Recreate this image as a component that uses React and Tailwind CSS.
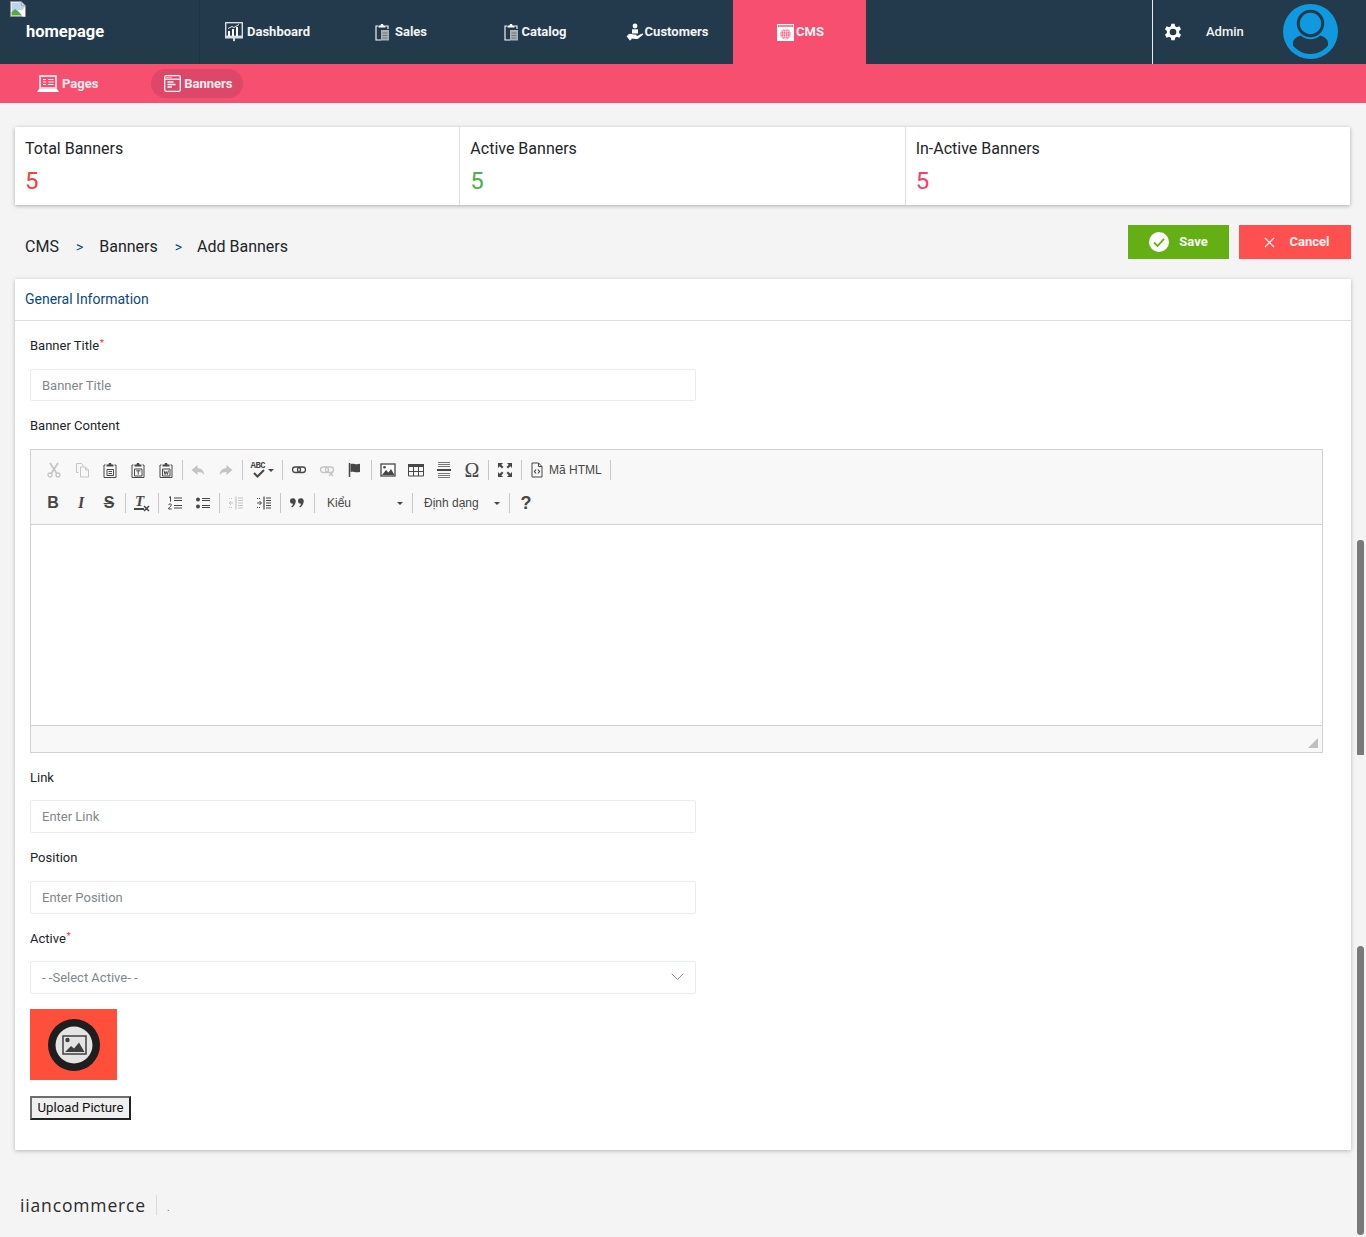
import React from "react";

const Sv = ({ s = 16, v = "0 0 16 16", c = "", children }) => (
  <svg width={s} height={s} viewBox={v} className={c} fill="none">{children}</svg>
);

/* ---------- header icons ---------- */
const DashIcon = () => (
  <svg width="18" height="20" viewBox="0 0 18 20" fill="none">
    <rect x="0.7" y="0.7" width="16.6" height="13.6" fill="none" stroke="#d9dde0" strokeWidth="1.4" />
    <path d="M0 15h18v1.5H0z" fill="#d9dde0" />
    <path d="M8 16h2v2.5l-1 1-1-1z" fill="#d9dde0" />
    <path d="M3 14V9h2v5zM7 14V7h2v7zM11 14V5h2v9z" fill="#fff" />
    <path d="M3 6.5 7 4.5l2 1 5-3" stroke="#fff" strokeWidth="0.9" />
  </svg>
);
const ClipIcon = () => (
  <svg width="14" height="18" viewBox="0 0 14 18" fill="none">
    <path d="M3 3H1v14h5" stroke="#fff" strokeWidth="1.1" />
    <path d="M10.5 3H13v3" stroke="#fff" strokeWidth="1.1" />
    <path d="M3.5 4.5V2.6h2L6 1h2l.5 1.6h2v1.9z" fill="#fff" />
    <rect x="6" y="7" width="8" height="10.5" fill="#a9b1b7" />
    <path d="M7.5 10h5M7.5 12.5h5M7.5 15h5" stroke="#5a6670" strokeWidth="0.8" />
  </svg>
);
const CustIcon = () => (
  <svg width="18" height="18" viewBox="0 0 18 18" fill="none">
    <circle cx="9" cy="3" r="2.4" fill="#fff" />
    <path d="M6 6.3h6v4.2H6z" fill="#fff" />
    <path d="M2 11.5c2-1.4 3.5-.8 5 0h3c.9 0 1 1.2 0 1.3H8.2l3.4-.1 4.5-2.2c1-.3 1.5.6.8 1.3l-4.5 3.6c-1.2.7-3.5.6-6.5.2l-2 2z" fill="#fff" />
    <path d="M0.5 13.2 2 12l3.5 4.2L4 17.5z" fill="#fff" />
  </svg>
);
const CmsIcon = () => (
  <svg width="17" height="17" viewBox="0 0 17 17" fill="none">
    <rect width="17" height="17" fill="#fff" />
    <rect x="1" y="1" width="15" height="2" fill="#f74f70" />
    <rect x="1.5" y="1.5" width="14" height="1" fill="#fbb" />
    <circle cx="8.5" cy="10" r="5.2" fill="#f74f70" />
    <g stroke="#fff" strokeWidth="0.6">
      <circle cx="8.5" cy="10" r="4.6" />
      <ellipse cx="8.5" cy="10" rx="2.2" ry="4.6" />
      <path d="M8.5 5.4v9.2M3.9 10h9.2M4.6 7.7h7.8M4.6 12.3h7.8" />
    </g>
  </svg>
);
const GearIcon = () => (
  <svg width="20" height="20" viewBox="0 0 24 24" fill="#fff">
    <path fillRule="evenodd" d="M14 1h-4l-.6 3a8.500 8.500 0 0 0-2.100 1.200L4.400 4.200 2.400 7.700l2.300 2a8.500 8.500 0 0 0 0 2.600l-2.300 2 2 3.500 2.900-1a8.500 8.500 0 0 0 2.100 1.200l.6 3h4l.6-3a8.500 8.500 0 0 0 2.100-1.200l2.900 1 2-3.500-2.300-2a8.500 8.500 0 0 0 0-2.600l2.300-2-2-3.500-2.900 1A8.500 8.500 0 0 0 14.600 4zM12 15a4 4 0 1 1 0-8 4 4 0 0 1 0 8z" transform="translate(0 1)" />
  </svg>
);
const Avatar = () => (
  <svg width="55" height="55" viewBox="0 0 55 55" fill="none">
    <circle cx="27.5" cy="27.5" r="27.5" fill="#0f9adf" />
    <circle cx="27.5" cy="19.5" r="12.2" fill="#0f9adf" stroke="#233a4c" strokeWidth="3" />
    <path d="M10 39c0-4 4-6.5 8-7.5 2.5 2.5 5.800 3.800 9.500 3.800S34.500 34 37 31.500c4 1 8 3.500 8 7.500v2.500C40.500 46.800 34.500 50 27.500 50S14.500 46.800 10 41.500z" fill="#233a4c" />
  </svg>
);
const BrokenImg = () => (
  <svg width="16" height="16" viewBox="0 0 16 16" fill="none">
    <path d="M0.500 0.500H11l4.500 4.500V15.500H0.500z" fill="#fff" stroke="#8e8e8e" />
    <path d="M11 0.500V5h4.500" fill="#d8d8d8" stroke="#8e8e8e" />
    <path d="M1.500 1.500h9V6h4v3L1.500 10z" fill="#bcd2f2" />
    <path d="M1.500 14.500V11L5 8l4 3 3 3.500z" fill="#58a845" />
    <path d="M12 9.500 15 6v9.500h-3z" fill="#fff" />
  </svg>
);
const PagesIcon = () => (
  <svg width="22" height="18" viewBox="0 0 22 18" fill="none">
    <rect x="3" y="1" width="16" height="12" stroke="#fff" strokeWidth="1.500" />
    <path d="M6 4.500h3M6 7h3M6 9.500h3M11 4.500h5.500M11 7h5.500M11 9.500h5.500" stroke="#fff" strokeWidth="1.200" />
    <path d="M2 14h18l2 3H0z" fill="#fff" />
  </svg>
);
const BannersIcon = () => (
  <svg width="17" height="17" viewBox="0 0 17 17" fill="none">
    <rect x="0.700" y="0.700" width="15.600" height="15.600" rx="1.500" stroke="#fff" strokeWidth="1.300" />
    <path d="M1 4.200h15" stroke="#fff" strokeWidth="1.200" />
    <path d="M2.500 2.500h1M4.500 2.500h1M6.500 2.500h1" stroke="#fff" />
    <path d="M3.500 7h6M3.500 9.500h8M3.500 12h4.500" stroke="#fff" strokeWidth="1.300" />
  </svg>
);

/* ---------- editor icons ---------- */
const D = "#474747";
const L = "#c4c4c4";
const Cut = () => (
  <Sv><g stroke={L} strokeWidth="1.700">
    <path d="M4 1l6.500 10M12 1 5.500 11" />
    <circle cx="4" cy="13" r="2" strokeWidth="1.300" />
    <circle cx="12" cy="13" r="2" strokeWidth="1.300" />
  </g></Sv>
);
const CopyI = () => (
  <Sv><g stroke={L} strokeWidth="1">
    <path d="M2.500 1.500h5l1.500 1.500v1.500M2.500 1.500v9h2" />
    <path d="M6.500 5h5l3 3v7h-8z" fill="#f8f8f8" />
    <path d="M11.500 5v3h3" />
  </g></Sv>
);
const Paste = ({ k }) => (
  <Sv>
    <path d="M3.500 3H2v12.500h12V3h-1.500" stroke={D} strokeWidth="1" />
    <path d="M4.500 4.500V2.500h2L7 1h2l.5 1.500h2v2z" fill={D} />
    {k === "l" && <path d="M5 7.500h6.500v6H5zM6.500 9.500h3.500M6.500 11.500h3.500" stroke={D} strokeWidth="1" />}
    {k === "t" && <path d="M4.500 7h7.500v7H4.500zM6.300 8.800h4M8.200 8.800v3.800" stroke={D} strokeWidth="1" />}
    {k === "w" && <path d="M4.500 7h7.500v7H4.500zM6 8.500l1 4 1.200-3 1.200 3 1-4" stroke={D} strokeWidth="1" />}
  </Sv>
);
const Undo = ({ flip }) => (
  <Sv c={flip ? "-scale-x-100" : ""}>
    <path d="M7.500 3 1.500 8l6 5v-3c3 0 5 .6 7 3-.5-4-3-6.700-7-7z" fill={L} />
  </Sv>
);
const Spell = () => (
  <span className="flex items-center gap-[2px]">
    <span className="relative block w-[15px] h-[16px]">
      <span className="absolute -top-[1px] left-0 text-[9px] leading-[11px] font-['Liberation_Mono',monospace] font-bold text-[#474747] tracking-[-0.5px]">ABC</span>
      <svg className="absolute left-[2px] top-[7px]" width="12" height="9" viewBox="0 0 12 9" fill="none"><path d="M1 4l3.500 3.500L11 1" stroke={D} strokeWidth="2" /></svg>
    </span>
    <span className="block border-x-[3px] border-t-[3px] border-x-transparent border-t-[#474747]" />
  </span>
);
const LinkI = ({ off }) => (
  <Sv>
    <g stroke={off ? L : D} strokeWidth="1.300">
      <rect x="1.500" y="5" width="8" height="5.500" rx="2.700" />
      <rect x="6.500" y="5" width="8" height="5.500" rx="2.700" />
      {off && <path d="M10 10l4 4M14 10l-4 4" />}
    </g>
  </Sv>
);
const Flag = () => (
  <Sv>
    <path d="M2.500 1v14" stroke={D} strokeWidth="1.500" />
    <path d="M3.500 2c3-1.200 4.500 1 9.500-.2v8.200c-5 1.200-6.500-1-9.500.2z" fill={D} />
  </Sv>
);
const ImageI = () => (
  <Sv>
    <rect x="1" y="2" width="14" height="12" stroke={D} strokeWidth="1.300" fill="#fff" />
    <circle cx="4.500" cy="5.300" r="1.300" fill={D} />
    <path d="M2 13l4-5 2.500 2.500L11 7l3.500 6z" fill={D} />
  </Sv>
);
const TableI = () => (
  <Sv>
    <path d="M0 2h16v3H0z" fill={D} />
    <path d="M.5 2v12h15V2M.5 9.500h15M5.500 5v9M10.500 5v9" stroke={D} strokeWidth="1" />
  </Sv>
);
const Hr = () => (
  <Sv>
    <path d="M2 .5h12M2 2.500h12M2 4.500h12M2 11.500h12M2 13.500h12M2 15.500h12" stroke="#777" strokeWidth="1" />
    <path d="M1 8h14" stroke={D} strokeWidth="2" />
  </Sv>
);
const Maxi = () => (
  <Sv>
    <path d="M1 1h5L4.300 2.700 6.500 5 5 6.500 2.700 4.300 1 6zM15 1v5l-1.700-1.700L11 6.500 9.500 5l2.200-2.300L10 1zM1 15v-5l1.700 1.700L5 9.500 6.500 11l-2.200 2.300L6 15zM15 15h-5l1.700-1.700L9.500 11 11 9.500l2.300 2.200L15 10z" fill={D} />
  </Sv>
);
const Source = () => (
  <Sv>
    <path d="M3 1h6.500L13 4.500V15H3z" stroke={D} strokeWidth="1" />
    <path d="M9.500 1v3.500H13" stroke={D} strokeWidth="1" />
    <path d="M7 7.500 5.500 9.500 7 11.500M9 7.500l1.500 2L9 11.500" stroke={D} strokeWidth="1.200" />
  </Sv>
);
const RemoveF = () => (
  <span className="relative block w-[16px] h-[16px] font-['Liberation_Serif',serif]">
    <span className="absolute left-[1px] -top-[1px] text-[15px] leading-[15px] italic font-bold text-[#474747]">T</span>
    <span className="absolute left-0 top-[13px] w-[10px] h-[1.500px] bg-[#474747]" />
    <svg className="absolute left-[9px] top-[10px]" width="7" height="7" viewBox="0 0 7 7"><path d="M1 1l5 5M6 1 1 6" stroke={D} strokeWidth="1.500" /></svg>
  </span>
);
const Ol = () => (
  <Sv>
    <path d="M7 3h8M7 5.500h8M7 10.500h8M7 13h8" stroke={D} strokeWidth="1.200" />
    <path d="M2 2.500l1.500-.8v5M1.500 10c.3-1.500 3-1.500 3 0 0 1-3 2.500-3 4h3.200" stroke={D} strokeWidth="1" />
  </Sv>
);
const Ul = () => (
  <Sv>
    <circle cx="3" cy="4.500" r="2" fill={D} />
    <circle cx="3" cy="11.500" r="2" fill={D} />
    <path d="M7 3.500h8M7 5.500h8M7 10.500h8M7 12.500h8" stroke={D} strokeWidth="1.200" />
  </Sv>
);
const Indent = ({ off, out }) => {
  const c = off ? L : D;
  return (
    <Sv>
      <path d="M8 1.500v13" stroke={c} strokeWidth="1.200" />
      <path d="M10 3h5M10 5.500h5M10 8h5M10 10.500h5M10 13h5" stroke={c} strokeWidth="1" />
      <path d={out ? "M1 8h4M3 6 1 8l2 2" : "M1 8h4M3.500 6l2 2-2 2"} stroke={c} strokeWidth="1" />
      <path d="M1 3.500h4M1 12.500h4" stroke={c} strokeWidth="1" strokeDasharray="1 1" />
    </Sv>
  );
};
const Quote = () => (
  <Sv>
    <circle cx="3.700" cy="6" r="2.700" fill={D} />
    <path d="M4.200 3.500c2.300 0 2.600 2 2.400 3.500-.3 2.500-1.700 4.500-3.600 5.500l-.8-1c1.500-1 2-2.500 2-4.500z" fill={D} />
    <circle cx="11.700" cy="6" r="2.700" fill={D} />
    <path d="M12.200 3.500c2.300 0 2.600 2 2.400 3.500-.3 2.500-1.700 4.500-3.600 5.500l-.8-1c1.500-1 2-2.500 2-4.500z" fill={D} />
  </Sv>
);

const Btn = ({ children }) => (
  <span className="flex w-[28px] h-[24px] shrink-0 items-center justify-center">{children}</span>
);
const Sep = () => (
  <span className="flex w-[4px] h-[20px] shrink-0 justify-center">
    <span className="block w-px h-full bg-[#c7c7c7]" />
  </span>
);
const Sep5 = () => (
  <span className="flex w-[5px] h-[20px] shrink-0 justify-center">
    <span className="block w-px h-full bg-[#c7c7c7]" />
  </span>
);
const Caret = () => (
  <span className="block border-x-[3px] border-t-[3px] border-x-transparent border-t-[#474747]" />
);
const G = ({ children, className = "" }) => (
  <span className={"text-[#474747] leading-none " + className}>{children}</span>
);

const NavItem = ({ icon, label, active, gap = "gap-[3px]", w = "w-[133px]", pad = "" }) => (
  <div className={"flex h-full items-center justify-center " + w + " " + gap + " " + pad + (active ? " bg-[#f74f70]" : "")}>
    <span className="flex shrink-0">{icon}</span>
    <span className="text-[13px] font-bold text-[#f3f4f5] -mt-px">{label}</span>
  </div>
);

const Stat = ({ title, color, border }) => (
  <div className={"flex-1 pl-[10px] pt-[12px] h-full " + (border ? "border-l border-[#dddddd]" : "")}>
    <div className="text-[16px] leading-[20px] text-[#212529]">{title}</div>
    <div className={"mt-[10px] text-[24px] leading-[24px] " + color}>5</div>
  </div>
);

const Field = ({ label, req, ph, className = "", gap = "mt-[14px]", h = "h-[33px]" }) => (
  <div className={className}>
    <div className="h-[16px] text-[13px] leading-[16px] text-[#212529]">
      {label}
      {req && <sup className="text-[#ff2020] text-[9px] ml-px">*</sup>}
    </div>
    <input
      placeholder={ph}
      className={"block w-[666px] rounded-[2px] border border-[#e9ecef] bg-white px-[11px] text-[13px] outline-none placeholder:text-[#7f878e] " + h + " " + gap}
    />
  </div>
);

export default function App() {
  return (
    <div className="relative h-[1237px] overflow-hidden bg-[#f4f4f4] font-['Roboto',sans-serif] text-[#212529]">
      {/* top navigation */}
      <header className="flex h-[64px] bg-[#233a4c]">
        <div className="relative w-[200px] shrink-0 border-r border-[#1f3342]">
          <span className="absolute left-[10px] top-[1px]"><BrokenImg /></span>
          <span className="absolute left-[26px] top-[22px] text-[16.500px] leading-[20px] font-bold text-white">homepage</span>
        </div>
        <nav className="flex">
          <NavItem icon={<DashIcon />} label="Dashboard" gap="gap-[4px]" pad="pl-[2px]" />
          <NavItem icon={<ClipIcon />} label="Sales" gap="gap-[6px]" pad="pl-[3px]" />
          <NavItem icon={<ClipIcon />} label="Catalog" gap="gap-[3px]" pad="pl-[6px]" />
          <NavItem icon={<CustIcon />} label="Customers" gap="gap-[1px]" w="w-[134px]" pad="pl-[2px]" />
          <NavItem icon={<CmsIcon />} label="CMS" active gap="gap-[2px]" pad="pl-[2px]" />
        </nav>
        <div className="ml-auto flex h-full w-[214px] shrink-0 items-center border-l border-[#e8eaec]">
          <span className="ml-[10px] flex"><GearIcon /></span>
          <span className="ml-[23px] text-[13px] font-medium text-[#f3f4f5] -mt-px">Admin</span>
          <span className="ml-[39px] flex -mt-[1px]"><Avatar /></span>
        </div>
      </header>

      {/* sub navigation */}
      <div className="flex h-[39px] items-center bg-[#f74f70] pl-[37px]">
        <div className="flex items-center gap-[3px]">
          <PagesIcon />
          <span className="text-[13px] font-bold text-[#fbeff2]">Pages</span>
        </div>
        <div className="ml-[53px] flex h-[29px] w-[92px] items-center justify-center gap-[3px] rounded-full bg-[#dd4768] pl-[2px]">
          <BannersIcon />
          <span className="text-[13px] font-bold text-[#fbeff2]">Banners</span>
        </div>
      </div>

      <main className="pl-[15px] pr-[15px]">
        {/* stats */}
        <section className="mt-[24px] flex h-[78px] w-[1335px] bg-white shadow-[0_1px_4px_rgba(0,0,0,0.3)]">
          <Stat title="Total Banners" color="text-[#f44336]" />
          <Stat title="Active Banners" color="text-[#4caf50]" border />
          <Stat title="In-Active Banners" color="text-[#f73e6c]" border />
        </section>

        {/* breadcrumb + actions */}
        <div className="flex h-[74px] w-[1336px] items-start">
          <div className="mt-[32px] flex items-center text-[16px] leading-[20px] pl-[10px]">
            <span>CMS</span>
            <span className="ml-[17px] text-[#0a4a7f] text-[14px]">&gt;</span>
            <span className="ml-[16px]">Banners</span>
            <span className="ml-[17px] text-[#0a4a7f] text-[14px]">&gt;</span>
            <span className="ml-[15px]">Add Banners</span>
          </div>
          <div className="ml-auto mt-[20px] flex gap-[10px]">
            <button className="flex h-[34px] w-[101px] items-center justify-center gap-[10px] bg-[#64b014] text-[13px] font-bold text-[#f7f9f3]">
              <svg width="20" height="20" viewBox="0 0 20 20" fill="none">
                <circle cx="10" cy="10" r="10" fill="#fff" />
                <path d="M5 10.500 8.500 14 15 6.800" stroke="#64b014" strokeWidth="1.800" />
              </svg>
              <span className="-mt-px">Save</span>
            </button>
            <button className="flex h-[34px] w-[112px] items-center justify-center gap-[15px] bg-[#ff5050] pl-[3px] text-[13px] font-bold text-[#fff5f5]">
              <svg width="11" height="11" viewBox="0 0 11 11" fill="none">
                <path d="M1 1l9 9M10 1l-9 9" stroke="#fff" strokeWidth="1.100" />
              </svg>
              <span className="-mt-px">Cancel</span>
            </button>
          </div>
        </div>

        {/* form card */}
        <section className="h-[871px] w-[1336px] bg-white shadow-[0_1px_4px_rgba(0,0,0,0.25)]">
          <div className="flex h-[42px] items-center border-b border-[#dedede] pl-[10px] text-[14px] text-[#0a4a7f]">
            General Information
          </div>
          <div className="px-[15px]">
            <Field className="mt-[17px]" gap="mt-[15px]" h="h-[32px]" label="Banner Title" req ph="Banner Title" />

            <div className="mt-[17px] h-[16px] text-[13px] leading-[16px]">Banner Content</div>

            {/* rich text editor */}
            <div className="mt-[15px] h-[304px] w-[1293px] border border-[#d1d1d1] bg-[#f8f8f8] font-['Liberation_Sans',sans-serif]">
              <div className="h-[75px] border-b border-[#d1d1d1] pl-[9px] pt-[8px]">
                <div className="flex h-[24px] items-center">
                  <Btn><Cut /></Btn>
                  <Btn><CopyI /></Btn>
                  <Btn><Paste k="l" /></Btn>
                  <Btn><Paste k="t" /></Btn>
                  <Btn><Paste k="w" /></Btn>
                  <Sep />
                  <Btn><Undo /></Btn>
                  <Btn><Undo flip /></Btn>
                  <Sep />
                  <span className="flex w-[36px] h-[24px] items-center justify-center"><Spell /></span>
                  <Sep5 />
                  <Btn><LinkI /></Btn>
                  <Btn><LinkI off /></Btn>
                  <Btn><Flag /></Btn>
                  <Sep5 />
                  <Btn><ImageI /></Btn>
                  <Btn><TableI /></Btn>
                  <Btn><Hr /></Btn>
                  <Btn><G className="text-[20px] font-['Liberation_Serif',serif]">Ω</G></Btn>
                  <Sep5 />
                  <Btn><Maxi /></Btn>
                  <Sep />
                  <span className="flex w-[85px] h-[24px] items-center pl-[6px] gap-[4px]">
                    <Source />
                    <span className="text-[12px] text-[#474747]">Mã HTML</span>
                  </span>
                  <Sep />
                </div>
                <div className="mt-[9px] flex h-[24px] items-center -ml-px">
                  <Btn><G className="text-[16px] font-bold">B</G></Btn>
                  <Btn><G className="text-[16px] font-bold italic font-['Liberation_Serif',serif]">I</G></Btn>
                  <Btn><G className="text-[16px] font-bold line-through">S</G></Btn>
                  <Sep />
                  <span className="ml-px flex"><Btn><RemoveF /></Btn></span>
                  <Sep />
                  <span className="ml-px flex"><Btn><Ol /></Btn></span>
                  <Btn><Ul /></Btn>
                  <Sep />
                  <span className="ml-px flex"><Btn><Indent off out /></Btn></span>
                  <Btn><Indent /></Btn>
                  <Sep />
                  <span className="ml-px flex"><Btn><Quote /></Btn></span>
                  <span className="ml-px flex"><Sep /></span>
                  <span className="flex h-[24px] w-[94px] shrink-0 items-center justify-between pl-[11px] pr-[7px]">
                    <span className="text-[12px] text-[#474747]">Kiểu</span>
                    <Caret />
                  </span>
                  <Sep />
                  <span className="flex h-[24px] w-[93px] shrink-0 items-center justify-between pl-[10px] pr-[7px]">
                    <span className="text-[12px] text-[#474747]">Định dạng</span>
                    <Caret />
                  </span>
                  <Sep />
                  <span className="ml-px flex"><Btn><G className="text-[18px] font-bold">?</G></Btn></span>
                </div>
              </div>
              <div className="h-[200px] bg-white" />
              <div className="relative h-[27px] border-t border-[#d1d1d1]">
                <span className="absolute bottom-[4px] right-[4px] block border-l-[10px] border-b-[10px] border-l-transparent border-b-[#bfbfbf]" />
              </div>
            </div>

            <Field className="mt-[17px]" gap="mt-[14px]" label="Link" ph="Enter Link" />
            <Field className="mt-[17px]" gap="mt-[15px]" label="Position" ph="Enter Position" />

            <div className="mt-[17px]">
              <div className="h-[16px] text-[13px] leading-[16px]">
                Active<sup className="text-[#ff2020] text-[9px] ml-px">*</sup>
              </div>
              <div className="relative mt-[14px] w-[666px]">
                <select className="block h-[33px] w-full appearance-none rounded-[2px] border border-[#e9ecef] bg-white px-[11px] text-[13px] text-[#7f878e] outline-none">
                  <option>- -Select Active- -</option>
                </select>
                <svg className="absolute right-[12px] top-[12px]" width="13" height="8" viewBox="0 0 13 8" fill="none">
                  <path d="M.7.700 6.500 6.500 12.300.700" stroke="#8b9197" strokeWidth="1" />
                </svg>
              </div>
            </div>

            {/* image placeholder */}
            <div className="mt-[15px] flex h-[71px] w-[87px] items-center justify-center bg-[#ff4f3b]">
              <svg width="52" height="52" viewBox="0 0 52 52" fill="none">
                <circle cx="26" cy="26" r="26" fill="#1e1e1e" />
                <circle cx="26" cy="26" r="18.500" fill="#e4e4e4" />
                <rect x="15" y="17" width="23" height="18" fill="none" stroke="#3f3f3f" strokeWidth="1.500" />
                <circle cx="19.500" cy="21" r="2.200" fill="#3f3f3f" />
                <path d="M17 33l6-6 3 2.500 5-6 5.500 9.500z" fill="#3f3f3f" />
              </svg>
            </div>

            <button className="mt-[16px] block h-[24px] w-[101px] border-2 border-[#6e6e6e] border-r-[#222] border-b-[#222] bg-[#efefef] text-[13.200px] leading-[18px] text-[#111]">
              Upload Picture
            </button>
          </div>
        </section>

        {/* footer */}
        <footer className="mt-[45px] flex h-[20px] items-center pl-[5px]">
          <span className="text-[17.500px] tracking-[0.85px] text-[#2b2b2b] font-['Open_Sans',sans-serif]">iiancommerce</span>
          <span className="ml-[10px] h-[20px] w-px bg-[#dcdcdc]" />
          <span className="ml-[10px] mt-[4px] text-[10px] text-[#666]">.</span>
        </footer>
      </main>

      {/* scrollbar thumbs */}
      <span className="absolute left-[1357px] top-[540px] h-[215px] w-[7px] rounded-t-[3px] bg-[#7a7a7a]" />
      <span className="absolute left-[1357px] top-[946px] h-[289px] w-[7px] rounded-[3.500px] bg-[#7a7a7a]" />
    </div>
  );
}
